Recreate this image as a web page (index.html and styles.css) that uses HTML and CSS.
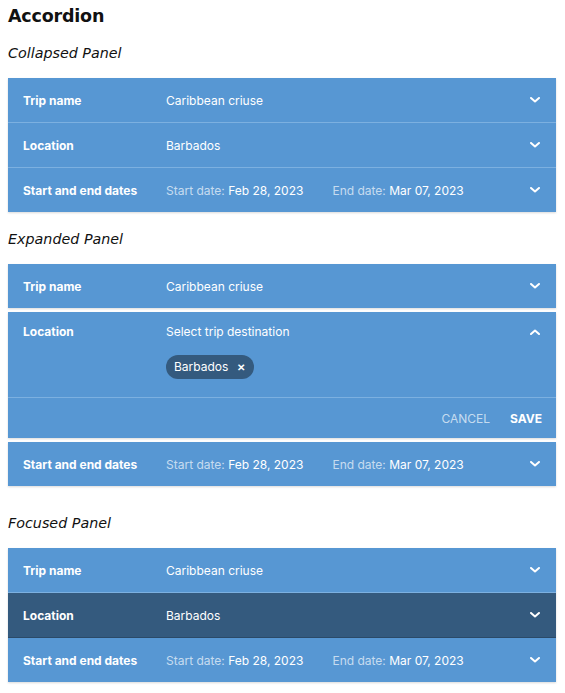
FILE: index.html
```html
<!DOCTYPE html>
<html>
<head>
<meta charset="utf-8">
<link rel="stylesheet" href="styles.css">
</head>
<body>
<div class="page">
  <h1 class="title">Accordion</h1>

  <h2 class="subtitle">Collapsed Panel</h2>
  <div class="accordion">
    <div class="row">
      <div class="label">Trip name</div>
      <div class="value">Caribbean criuse</div>
      <svg class="chev" viewBox="0 0 10 6"><path d="M1 1l4 3.5L9 1"/></svg>
    </div>
    <div class="row">
      <div class="label">Location</div>
      <div class="value">Barbados</div>
      <svg class="chev" viewBox="0 0 10 6"><path d="M1 1l4 3.5L9 1"/></svg>
    </div>
    <div class="row">
      <div class="label">Start and end dates</div>
      <div class="value"><span class="dim">Start date:</span> Feb 28, 2023<span class="end"><span class="dim">End date:</span> Mar 07, 2023</span></div>
      <svg class="chev" viewBox="0 0 10 6"><path d="M1 1l4 3.5L9 1"/></svg>
    </div>
  </div>

  <h2 class="subtitle">Expanded Panel</h2>
  <div class="accordion split">
    <div class="panel">
      <div class="row">
        <div class="label">Trip name</div>
        <div class="value">Caribbean criuse</div>
        <svg class="chev" viewBox="0 0 10 6"><path d="M1 1l4 3.5L9 1"/></svg>
      </div>
    </div>
    <div class="panel">
      <div class="row open">
        <div class="label">Location</div>
        <div class="value">
          <div>Select trip destination</div>
          <div class="chip">Barbados <span class="x">✕</span></div>
        </div>
        <svg class="chev" viewBox="0 0 10 6"><path d="M1 5l4-3.5L9 5"/></svg>
      </div>
      <div class="actions">
        <span class="cancel">CANCEL</span>
        <span class="save">SAVE</span>
      </div>
    </div>
    <div class="panel">
      <div class="row">
        <div class="label">Start and end dates</div>
        <div class="value"><span class="dim">Start date:</span> Feb 28, 2023<span class="end"><span class="dim">End date:</span> Mar 07, 2023</span></div>
        <svg class="chev" viewBox="0 0 10 6"><path d="M1 1l4 3.5L9 1"/></svg>
      </div>
    </div>
  </div>

  <h2 class="subtitle">Focused Panel</h2>
  <div class="accordion">
    <div class="row">
      <div class="label">Trip name</div>
      <div class="value">Caribbean criuse</div>
      <svg class="chev" viewBox="0 0 10 6"><path d="M1 1l4 3.5L9 1"/></svg>
    </div>
    <div class="row focused">
      <div class="label">Location</div>
      <div class="value">Barbados</div>
      <svg class="chev" viewBox="0 0 10 6"><path d="M1 1l4 3.5L9 1"/></svg>
    </div>
    <div class="row">
      <div class="label">Start and end dates</div>
      <div class="value"><span class="dim">Start date:</span> Feb 28, 2023<span class="end"><span class="dim">End date:</span> Mar 07, 2023</span></div>
      <svg class="chev" viewBox="0 0 10 6"><path d="M1 1l4 3.5L9 1"/></svg>
    </div>
  </div>
</div>
</body>
</html>
```

FILE: styles.css
```css
html, body {
  margin: 0;
  padding: 0;
  background: #ffffff;
}
.page {
  padding: 6px 9px 10px 8px;
  font-family: Inter, "Liberation Sans", sans-serif;
}
.title {
  margin: 0;
  font-family: "DejaVu Sans", sans-serif;
  font-weight: 700;
  font-size: 17.5px;
  line-height: 20px;
  color: #111;
  letter-spacing: -0.2px;
}
.subtitle {
  margin: 17px 0 15px;
  font-family: "DejaVu Sans", sans-serif;
  font-style: italic;
  font-weight: 400;
  font-size: 14.3px;
  line-height: 20px;
  color: #111;
}
.accordion {
  background: #5797d3;
  box-shadow: 0 1px 2px rgba(0,0,0,0.15);
}
.accordion.split {
  background: transparent;
  box-shadow: none;
  display: flex;
  flex-direction: column;
  gap: 4px;
  margin-bottom: 27px;
}
.accordion.split + .subtitle {
  margin-top: 0;
}
.panel {
  background: #5797d3;
  box-shadow: 0 1px 2px rgba(0,0,0,0.15);
}
.row {
  display: flex;
  align-items: center;
  height: 44px;
  padding: 0 15px;
  color: #fff;
  font-size: 12px;
  border-top: 1px solid #7cb0e0;
}
.accordion > .row:first-child,
.panel > .row:first-child {
  border-top: none;
}
.row.focused {
  background: #345a7e;
  border-top-color: #7cb0e0;
  border-bottom: 1px solid #2b4a68;
  height: 44px;
}
.row.focused + .row {
  border-top: none;
}
.label {
  width: 143px;
  font-weight: 700;
}
.value {
  flex: 1;
}
.dim {
  color: rgba(255,255,255,0.68);
}
.end {
  margin-left: 29px;
}
.chev {
  width: 10px;
  height: 6px;
  fill: none;
  stroke: #fff;
  stroke-width: 2;
  stroke-linecap: round;
  stroke-linejoin: round;
  margin-right: 1px;
}
.row.open {
  height: auto;
  align-items: flex-start;
  padding-top: 13px;
  padding-bottom: 18px;
  line-height: 14px;
}
.row.open .chev {
  margin-top: 4px;
}
.chip {
  display: inline-flex;
  align-items: center;
  margin-top: 16px;
  height: 24px;
  padding: 0 9px 0 8px;
  border-radius: 12px;
  background: #345a7e;
  color: #fff;
  font-size: 12px;
}
.chip .x {
  margin-left: 9px;
  font-size: 10px;
  font-weight: 700;
}
.actions {
  display: flex;
  justify-content: flex-end;
  align-items: center;
  gap: 20px;
  height: 40px;
  padding: 0 14px;
  border-top: 1px solid #7cb0e0;
  font-size: 12px;
  color: #fff;
}
.cancel {
  color: rgba(255,255,255,0.68);
}
.save {
  font-weight: 700;
}
```
